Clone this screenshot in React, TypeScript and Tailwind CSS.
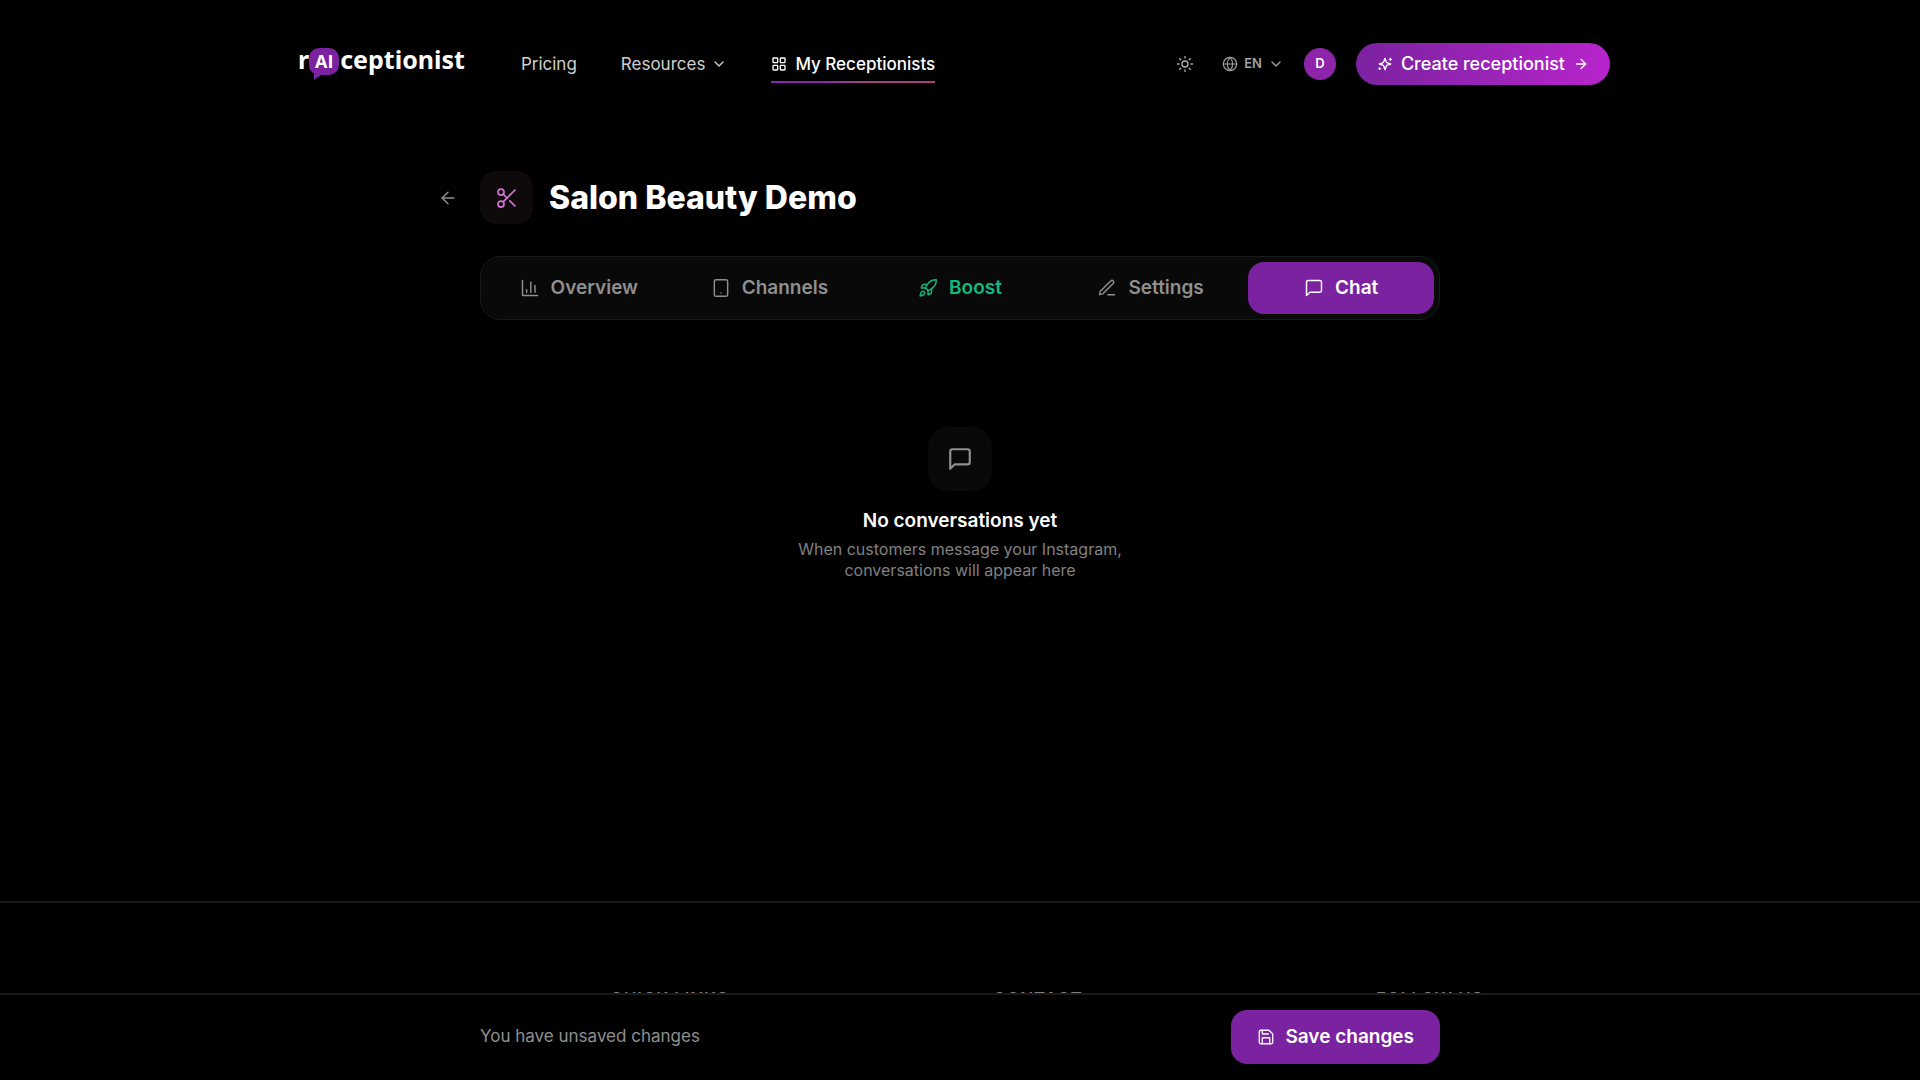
import React from "react";
import {
  ArrowLeft,
  ArrowRight,
  ChevronDown,
  Globe,
  LayoutGrid,
  Rocket,
  Save,
  Scissors,
  Sun,
  Tablet,
} from "lucide-react";

type IconProps = { size: number; strokeWidth?: number };

function Outline({ size, strokeWidth = 1.75, children }: IconProps & { children: React.ReactNode }) {
  return (
    <svg
      width={size}
      height={size}
      viewBox="0 0 24 24"
      fill="none"
      stroke="currentColor"
      strokeWidth={strokeWidth}
      strokeLinecap="round"
      strokeLinejoin="round"
      aria-hidden="true"
    >
      {children}
    </svg>
  );
}

function ChartIcon(props: IconProps) {
  return (
    <Outline {...props}>
      <path d="M3 3v17a1 1 0 0 0 1 1h17" />
      <path d="M18 17V9" />
      <path d="M13 17V5" />
      <path d="M8 17v-3" />
    </Outline>
  );
}

function PenIcon(props: IconProps) {
  return (
    <Outline {...props}>
      <path d="M13 20h8" />
      <path d="M16.5 3.5a2.12 2.12 0 0 1 3 3L7 19l-4 1 1-4Z" />
    </Outline>
  );
}

function MessageIcon(props: IconProps) {
  return (
    <Outline {...props}>
      <path d="M21 15a2 2 0 0 1-2 2H7l-4 4V5a2 2 0 0 1 2-2h14a2 2 0 0 1 2 2z" />
    </Outline>
  );
}

function SparkleIcon(props: IconProps) {
  return (
    <Outline {...props}>
      <path d="M12 3.500l1.800 5.200a2.500 2.500 0 0 0 1.500 1.500L20.500 12l-5.200 1.800a2.500 2.500 0 0 0-1.500 1.500L12 20.500l-1.800-5.200a2.500 2.500 0 0 0-1.500-1.500L3.500 12l5.200-1.800a2.500 2.500 0 0 0 1.500-1.500z" />
      <path d="M20 3.500v3M18.500 5h3" />
      <path d="M4 18v2M3 19h2" />
    </Outline>
  );
}

function Logo() {
  return (
    <a
      href="#"
      aria-label="rAIceptionist"
      className="flex h-8 items-start font-['Noto_Sans',sans-serif] text-[25px] leading-[22px] font-bold text-white"
    >
      <span>r</span>
      <span className="relative mr-px flex h-8 w-[30px] items-start justify-center">
        <svg className="absolute inset-0" width="30" height="32" viewBox="0 0 30 32" aria-hidden="true">
          <path
            d="M10 0h10a10 10 0 0 1 10 10v7a10 10 0 0 1-10 10h-8l-7 5v-6.500A10 10 0 0 1 0 17v-7A10 10 0 0 1 10 0z"
            fill="#7b22a0"
          />
        </svg>
        <span className="relative font-['Open_Sans',sans-serif] text-lg leading-[26px]">AI</span>
      </span>
      <span>ceptionist</span>
    </a>
  );
}

function Header() {
  return (
    <header className="mx-auto flex h-32 w-full max-w-[1324px] items-center pr-3">
      <Logo />
      <nav className="ml-14 flex items-center gap-11 text-[17px] leading-6 text-[#cfcfcf]">
        <a href="#">Pricing</a>
        <button type="button" className="flex items-center gap-1.5">
          Resources
          <ChevronDown size={16} />
        </button>
        <a href="#" aria-current="page" className="relative flex items-center gap-2 font-medium text-white">
          <LayoutGrid size={16} />
          My Receptionists
          <span className="absolute -bottom-[7px] left-0 h-0.5 w-full bg-linear-to-r from-[#8a25b0] from-35% to-[#a8407c] to-55%" />
        </a>
      </nav>
      <div className="ml-auto flex items-center">
        <button type="button" aria-label="Toggle theme" className="text-[#b0b0b0]">
          <Sun size={18} strokeWidth={1.75} />
        </button>
        <button type="button" className="ml-7 flex items-center gap-1.5 text-[13px] font-semibold text-[#a0a0a0]">
          <Globe size={16} strokeWidth={1.75} />
          EN
          <ChevronDown size={16} />
        </button>
        <button type="button" className="ml-5 size-8 rounded-full bg-[#8e24aa] text-[13px] font-semibold text-white">
          D
        </button>
        <button
          type="button"
          className="ml-5 flex h-[42px] items-center gap-2 rounded-full bg-linear-to-r from-[#7b22a0] to-[#b824cc] px-[21px] text-lg font-medium text-white"
        >
          <SparkleIcon size={16} strokeWidth={2} />
          Create receptionist
          <ArrowRight size={16} />
        </button>
      </div>
    </header>
  );
}

const tabs = [
  { label: "Overview", icon: <ChartIcon size={20} />, tone: "text-[#8f8f8f]" },
  { label: "Channels", icon: <Tablet size={20} strokeWidth={1.75} />, tone: "text-[#8f8f8f]" },
  { label: "Boost", icon: <Rocket size={20} strokeWidth={1.75} />, tone: "text-[#10b981]" },
  { label: "Settings", icon: <PenIcon size={20} />, tone: "text-[#8f8f8f]" },
  { label: "Chat", icon: <MessageIcon size={20} />, tone: "bg-[#7b22a0] text-white" },
];

export default function App() {
  return (
    <div className="flex h-screen flex-col overflow-hidden bg-black font-['Inter',sans-serif] text-white">
      <Header />
      <main className="mx-auto w-full max-w-[960px] flex-1 pt-[43px]">
        <div className="relative flex h-[53px] items-center gap-4">
          <a href="#" aria-label="Back" className="absolute -left-[42px] text-[#8f8f8f]">
            <ArrowLeft size={20} strokeWidth={1.75} />
          </a>
          <div className="flex size-[53px] items-center justify-center rounded-2xl bg-[#0e0a0c] text-[#d070d0]">
            <Scissors size={24} strokeWidth={1.75} />
          </div>
          <h1 className="text-[32px] font-extrabold">Salon Beauty Demo</h1>
        </div>

        <div
          role="tablist"
          className="mt-8 grid h-16 grid-cols-5 gap-[5px] rounded-[20px] border border-[#191919] bg-[#090909] p-[5px]"
        >
          {tabs.map((t) => (
            <button
              key={t.label}
              type="button"
              role="tab"
              aria-selected={t.label === "Chat"}
              className={`flex items-center justify-center gap-[11px] rounded-2xl text-[19px] font-semibold ${t.tone}`}
            >
              {t.icon}
              {t.label}
            </button>
          ))}
        </div>

        <section className="mt-[107px] flex flex-col items-center text-center">
          <div className="flex size-16 items-center justify-center rounded-[20px] bg-[#090909] text-[#8f8f8f]">
            <MessageIcon size={26} strokeWidth={2} />
          </div>
          <h2 className="mt-[18px] text-[19px] leading-6 font-semibold">No conversations yet</h2>
          <p className="mt-1.5 w-[340px] text-base leading-[21px] text-[#808080]">
            When customers message your Instagram, conversations will appear here
          </p>
        </section>
      </main>

      <footer className="h-[179px] shrink-0 border-t-2 border-[#191919]">
        <div className="mx-auto grid w-full max-w-[1532px] grid-cols-4 pt-[84px] text-[17px] leading-6 font-semibold tracking-wider text-[#808080] uppercase">
          <h3 className="col-start-2 pl-[33px]">Quick links</h3>
          <h3 className="pl-[33px]">Contact</h3>
          <h3 className="pl-[33px]">Follow us</h3>
        </div>
      </footer>

      <div className="fixed inset-x-0 bottom-0 border-t-2 border-[#191919] bg-black">
        <div className="mx-auto flex w-full max-w-[960px] items-center justify-between pt-[15px] pb-4">
          <p className="text-[17px] text-[#8f8f8f]">You have unsaved changes</p>
          <button
            type="button"
            className="flex h-[54px] items-center gap-2.5 rounded-2xl bg-[#7b22a0] px-[26px] text-[19px] font-semibold text-white"
          >
            <Save size={18} strokeWidth={1.75} />
            Save changes
          </button>
        </div>
      </div>
    </div>
  );
}
